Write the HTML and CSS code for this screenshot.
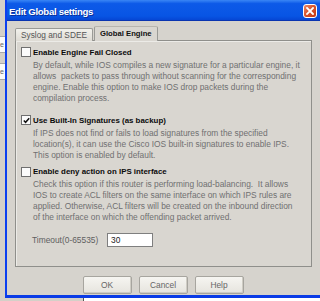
FILE: index.html
```html
<!DOCTYPE html>
<html>
<head>
<meta charset="utf-8">
<link rel="stylesheet" href="styles.css">
</head>
<body>
<div class="desktop">
  <div class="behind">
    <div class="behind-item">e</div>
    <div class="behind-item">e</div>
  </div>
  <div class="window">
    <div class="titlebar">
      <span class="title">Edit Global settings</span>
      <span class="close">
        <svg width="8" height="8" viewBox="0 0 8 8"><path d="M1 1L7 7M7 1L1 7" stroke="#fff" stroke-width="1.8" stroke-linecap="square"/></svg>
      </span>
    </div>
    <div class="client">
      <div class="tabs">
        <div class="tab">Syslog and SDEE</div>
        <div class="tab active">Global Engine</div>
      </div>
      <div class="panel">
        <div class="option first">
          <div class="check-row"><span class="cb"></span><span class="label">Enable Engine Fail Closed</span></div>
          <p class="desc">By default, while IOS compiles a new signature for a particular engine, it<br>allows&nbsp; packets to pass through without scanning for the corresponding<br>engine. Enable this option to make IOS drop packets during the<br>compilation process.</p>
        </div>
        <div class="option second">
          <div class="check-row"><span class="cb checked"><svg width="7" height="7" viewBox="0 0 7 7"><path d="M0.8 3.4L2.6 5.3L6.2 1.2" fill="none" stroke="#111" stroke-width="1.5"/></svg></span><span class="label">Use Built-In Signatures (as backup)</span></div>
          <p class="desc">If IPS does not find or fails to load signatures from the specified<br>location(s), it can use the Cisco IOS built-in signatures to enable IPS.<br>This option is enabled by default.</p>
        </div>
        <div class="option third">
          <div class="check-row"><span class="cb"></span><span class="label">Enable deny action on IPS interface</span></div>
          <p class="desc">Check this option if this router is performing load-balancing.&nbsp; It allows<br>IOS to create ACL filters on the same interface on which IPS rules are<br>applied. Otherwise, ACL filters will be created on the inbound direction<br>of the interface on which the offending packet arrived.</p>
        </div>
        <div class="timeout">
          <span class="timeout-label">Timeout(0-65535)</span>
          <span class="field">30</span>
        </div>
      </div>
      <div class="buttons">
        <span class="btn">OK</span>
        <span class="btn">Cancel</span>
        <span class="btn">Help</span>
      </div>
    </div>
  </div>
</div>
<div class="under">
  <div class="under-left"></div>
  <div class="under-right"></div>
</div>
</body>
</html>
```

FILE: styles.css
```css
html, body {
  margin: 0;
  padding: 0;
  width: 320px;
  height: 301px;
  overflow: hidden;
  background: #d4d0c8;
  font-family: "Liberation Sans", Arial, sans-serif;
}

.desktop {
  display: flex;
  height: 298px;
  overflow: hidden;
}

.behind {
  flex: none;
  width: 5px;
  background: #d4d0c8;
  display: flex;
  flex-direction: column;
  gap: 10px;
  padding-top: 36px;
  overflow: hidden;
}

.behind-item {
  height: 15px;
  background: #fafafa;
  border-top: 1px solid #a8a8a8;
  border-bottom: 1px solid #a8a8a8;
  font-size: 7px;
  line-height: 15px;
  color: #666;
  overflow: hidden;
}

.window {
  flex: none;
  width: 313px;
  display: flex;
  flex-direction: column;
  border-left: 2px solid #0b3ff0;
  border-bottom: 3px solid #0a3be6;
  box-shadow: inset 0 -1px 0 #0020a0;
}

.titlebar {
  flex: none;
  height: 20px;
  display: flex;
  align-items: center;
  justify-content: space-between;
  padding: 0 0 0 2px;
  background: linear-gradient(#3a86f5 0, #0d5ae8 18%, #0855e4 80%, #0646d4 100%);
  border-bottom: 1px solid #0a34b0;
}

.title {
  color: #fff;
  font-weight: bold;
  font-size: 9.6px;
  letter-spacing: -0.3px;
  text-shadow: 1px 1px 0 #0a2f9a;
  margin-top: 2px;
}

.close {
  width: 12px;
  height: 12px;
  margin-right: 3px;
  margin-top: 2px;
  border: 1px solid #fff;
  border-radius: 3px;
  background: linear-gradient(135deg, #ec8a6a 0, #d8562f 45%, #c23814 100%);
  display: flex;
  align-items: center;
  justify-content: center;
}

.close svg { display: block; }

.client {
  flex: 1;
  display: flex;
  flex-direction: column;
  padding: 5px 8px 0 8px;
  background: #d6d3cd;
}

.tabs {
  display: flex;
  align-items: flex-end;
  height: 15px;
  margin-bottom: -1px;
  position: relative;
  z-index: 1;
}

.tab {
  height: 12px;
  padding: 0 5px;
  font-size: 8.3px;
  line-height: 12px;
  color: #555;
  border: 1px solid #9a9a96;
  border-bottom: none;
  border-radius: 2px 2px 0 0;
  background: linear-gradient(#f2f1ec, #dedbd4);
}

.tab.active {
  height: 14px;
  line-height: 14px;
  margin-left: 1px;
  font-weight: bold;
  font-size: 7.7px;
  color: #111;
  background: #d9d6d0;
  border-color: #9a9a96;
  border-top: 1px solid #b8b5ae;
}

.panel {
  height: 220px;
  border: 1px solid #8f8f8b;
  background: #d9d6d0;
  padding: 5px 0 0 5px;
  box-shadow: inset 1px 1px 0 #ecebe7;
}

.check-row {
  display: flex;
  align-items: center;
  height: 12px;
}

.cb {
  width: 8px;
  height: 8px;
  border: 1px solid #6f6f6f;
  background: #fbfbfb;
  margin-right: 2px;
  display: flex;
  align-items: center;
  justify-content: center;
}

.cb svg { display: block; }

.label {
  font-weight: bold;
  font-size: 7.9px;
  color: #0b0b0b;
}

.desc {
  margin: 1.5px 0 0 12px;
  font-size: 8.4px;
  line-height: 11px;
  color: #707070;
  white-space: nowrap;
}

.option.first { margin-bottom: 10.5px; }
.option.second { margin-bottom: 5px; }
.option.third { margin-bottom: 10px; }

.timeout {
  display: flex;
  align-items: center;
  height: 14px;
  padding-left: 11px;
}

.timeout-label {
  font-size: 8.4px;
  color: #606060;
  width: 75px;
}

.field {
  width: 41px;
  height: 12px;
  border: 1px solid #7f7f7f;
  background: #fff;
  font-size: 8.4px;
  line-height: 12px;
  padding-left: 3px;
  color: #222;
}

.buttons {
  display: flex;
  justify-content: center;
  gap: 7px;
  margin-top: 9px;
  padding-right: 1px;
}

.btn {
  width: 47px;
  height: 16px;
  border: 1px solid #a7a59f;
  border-radius: 2px;
  background: linear-gradient(#f6f5f1, #e6e4de);
  box-shadow: inset -1px -1px 0 #cfccc4;
  font-size: 8.4px;
  line-height: 16px;
  text-align: center;
  color: #666;
}

.under {
  display: flex;
  height: 3px;
}

.under-left {
  width: 83px;
  background: #d4d0c8;
  border-right: 1px solid #555;
}

.under-right {
  flex: 1;
  background: #fff;
}
```
